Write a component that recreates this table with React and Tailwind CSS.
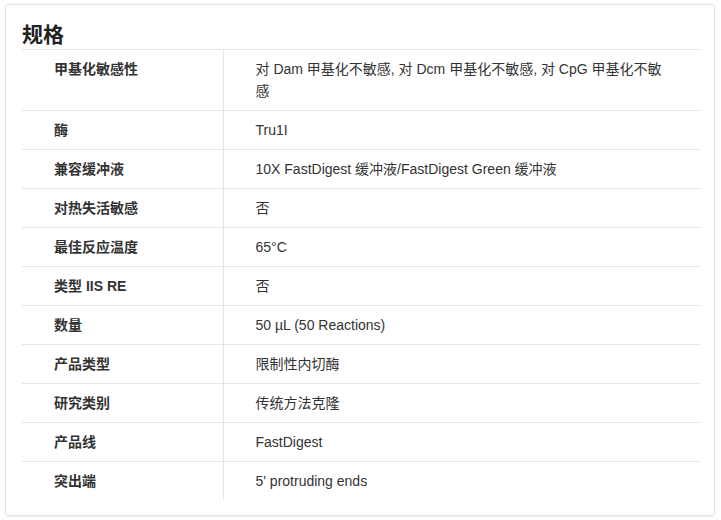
const specs = [
  ["甲基化敏感性", "对 Dam 甲基化不敏感, 对 Dcm 甲基化不敏感, 对 CpG 甲基化不敏感"],
  ["酶", "Tru1I"],
  ["兼容缓冲液", "10X FastDigest 缓冲液/FastDigest Green 缓冲液"],
  ["对热失活敏感", "否"],
  ["最佳反应温度", "65°C"],
  ["类型 IIS RE", "否"],
  ["数量", "50 µL (50 Reactions)"],
  ["产品类型", "限制性内切酶"],
  ["研究类别", "传统方法克隆"],
  ["产品线", "FastDigest"],
  ["突出端", "5' protruding ends"],
];

export default function App() {
  return (
    <div
      className="min-h-[520px] bg-white pt-[4px] pl-[5px]"
      style={{ fontFamily: '"Liberation Sans", Arial, "Noto Sans CJK SC", sans-serif' }}
    >
      <div className="w-[710px] rounded-[4px] border border-[#e3e3e3] bg-white pt-[16px] pb-[15px] pl-[16px] pr-[12px] shadow-[0_1px_3px_rgba(0,0,0,0.08)]">
        <h2 className="text-[21px] font-bold leading-[28px] text-[#222]">规格</h2>
        <table className="w-[679px] table-fixed border-collapse text-[14px] text-[#333]">
          <colgroup>
            <col className="w-[201px]" />
            <col />
          </colgroup>
          <tbody>
            {specs.map(([label, value], i) => (
              <tr
                key={label}
                className={i === specs.length - 1 ? "border-t border-[#e6e6e6]" : "border-y border-[#e6e6e6]"}
              >
                <td className="border-r border-[#e6e6e6] py-2 pl-[32px] pr-4 align-top font-bold leading-[22px]">
                  {label}
                </td>
                <td className="py-2 pl-[32px] pr-[32px] align-top leading-[22px]">{value}</td>
              </tr>
            ))}
          </tbody>
        </table>
      </div>
    </div>
  );
}
